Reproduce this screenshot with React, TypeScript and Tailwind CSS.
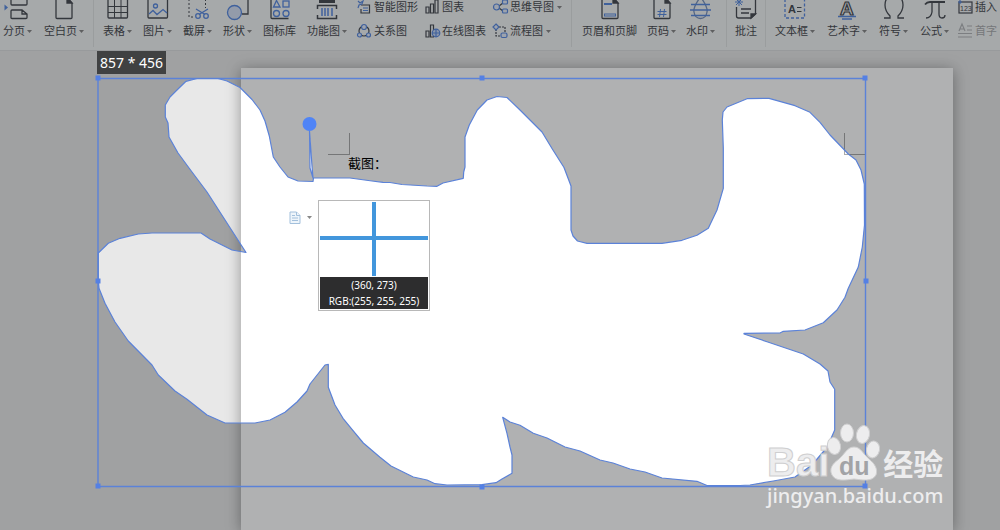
import { ReactNode } from "react";
import clsx from "clsx";

const INK = "#4b4f55";
const BLUE = "#5c8be0";

// freehand outline of the captured region
const REGION =
  "M246 252.5L207 192L192 172L178 153L169 137L168 123L165.300 117L165.300 105L170 97L177 90L186 81.300L197 78.500L218 78.500L227 81L240 87.500L252 99.500L260 110L265 121L269.300 136L273.300 157L280 167L288 177L298 181L313 181.500L313.500 178L350 178L372 181L383 182.300L390 182.500L402 184.500L427 186L437 186.300L443 183L463.300 178.300L463.700 172L465 167L465 137L469.300 125L477.300 110L487 100L497 96.500L507 97.500L520 110L542 132L552 148.500L564 167.500L571 186L571 230L573 236L577.500 241L587 243.300L662 243.300L682 240.300L697 235.300L708.300 228.300L717 210L723.300 188.300L723.300 148.300L722.300 120L723 112L727 107L747 98.700L769 98.300L795 105.700L810 112.300L820 122.300L830 135L848.300 154L856 160L861 170L864.300 184L864.500 225L862.300 247L858.300 267L848.300 288.300L845 297.300L837 310L823.300 322.700L805 330L783.300 331.300L780 333L744 333.300L744 334L767 341.700L803.300 354L820 364L828 371L830 382L834.700 389.300L834.700 430L827.300 447L812 465L795 477L773.300 481L750 485L740 485.500L707 485.500L697 481.300L662 478L645 472L630 469L613 463L600 460L580 451L565 447L547 438L533.300 433.300L520 425.300L510 422L502.700 417.300L507 433.300L510 447L512 455L512 473.300L502 479L496 482.700L482 484.700L447 485L435 483.700L427 480L413.300 477L391 466L380 457.300L363.300 443L352 429.300L343 418.300L335 405L328.300 387.300L328.300 364.300L325 365L310 384L307 391L297 402L285 412.300L270 420L255 423L225 423L207 415L187 399.300L175 391L158.300 375L152 365L128.300 341L115 322L105 303.300L99 288.300L98.300 280L98.300 253L108.300 243.300L120 238.300L138.300 234L152 233L201 233L210 239L232 250Z";
const SLIVER = "M309.500 131L310 168L313 178L312 166Z";

const HANDLES = [
  [98, 78], [482, 78], [865, 78],
  [98, 281], [866, 281],
  [98, 486], [482, 487], [865, 486],
];

const BigIcon = ({ children }: { children: ReactNode }) => (
  <svg
    width="22"
    height="22"
    viewBox="0 0 22 22"
    fill="none"
    stroke={INK}
    strokeWidth="1.3"
    className="shrink-0 overflow-visible"
  >
    {children}
  </svg>
);

const SmallIcon = ({ children }: { children: ReactNode }) => (
  <svg
    width="14"
    height="14"
    viewBox="0 0 14 14"
    fill="none"
    stroke={INK}
    strokeWidth="1.2"
    className="shrink-0 overflow-visible"
  >
    {children}
  </svg>
);

const Arrow = () => (
  <svg width="5" height="3" viewBox="0 0 5 3" fill="#888" className="shrink-0">
    <path d="M0 0H5L2.500 3Z" />
  </svg>
);

type ToolProps = { label: string; icon: ReactNode; menu?: boolean };

const Tool = ({ label, icon, menu }: ToolProps) => (
  <button className="flex shrink-0 flex-col items-center gap-1">
    <BigIcon>{icon}</BigIcon>
    <span className="flex items-center gap-[2px] whitespace-nowrap">
      {label}
      {menu && <Arrow />}
    </span>
  </button>
);

const SmallTool = ({ label, icon, menu, disabled }: ToolProps & { disabled?: boolean }) => (
  <button
    disabled={disabled}
    className={clsx(
      "flex h-[14px] shrink-0 items-center gap-[3px] leading-[14px] whitespace-nowrap",
      disabled && "text-[#aaacae]"
    )}
  >
    <SmallIcon>{icon}</SmallIcon>
    {label}
    {menu && <Arrow />}
  </button>
);

const SmallColumn = ({ children }: { children: ReactNode }) => (
  <div className="flex flex-col justify-end gap-[10px] pb-px">{children}</div>
);

const Divider = () => <span className="-mb-2 h-14 w-px shrink-0 bg-[#e0e2e3]" />;

const pageIcon = (
  <>
    <path d="M3 -2V20.500Q3 21.500 4 21.500H18Q19 21.500 19 20.500V6L14 0" />
    <path d="M14 1V6H19Z" fill={INK} />
  </>
);

const Ribbon = () => (
  <header className="flex h-[51px] items-end overflow-hidden border-b border-[#dcdedf] bg-[#f1f3f4] pb-[11px] text-[11px] leading-4 text-[#4b4e52]">
    <div className="flex shrink-0 gap-3 pr-[9px] pl-[3px]">
      <Tool
        menu
        label="分页"
        icon={
          <>
            <path d="M4 -2V7Q4 8 5 8H19Q20 8 20 7V-2" />
            <path d="M4 21V14Q4 13 5 13H15L20 17V20.500Q20 21.500 19 21.500H5Q4 21.500 4 21M15 13V17H20" />
            <path d="M-2.500 7.500L1 10.500L-2.500 13.500Z" fill={BLUE} stroke="none" />
          </>
        }
      />
      <Tool menu label="空白页" icon={pageIcon} />
    </div>
    <Divider />
    <div className="flex shrink-0 gap-[11px] px-[9px]">
      <Tool
        menu
        label="表格"
        icon={
          <>
            <rect x="1" y="0" width="19.500" height="21" rx="1" />
            <path d="M1 9.500H20.500M1 15.500H20.500M7.500 0V21M14 0V21" strokeWidth="1" />
          </>
        }
      />
      <Tool
        menu
        label="图片"
        icon={
          <>
            <rect x="1" y="0" width="19.500" height="21" rx="1" />
            <circle cx="8.500" cy="9" r="2" stroke={BLUE} />
            <path d="M2 17L6 13.500L10 17.500L16 12.500L20 16" stroke={BLUE} />
          </>
        }
      />
      <Tool
        menu
        label="截屏"
        icon={
          <>
            <path d="M2 2V20H7M18.500 2V11" strokeDasharray="2 2" strokeWidth="1" />
            <g stroke={BLUE}>
              <circle cx="11" cy="19" r="2.300" />
              <circle cx="19" cy="19" r="2.300" />
              <path d="M9 12L18 17.500M21 12L12 17.500" />
            </g>
          </>
        }
      />
      <Tool
        menu
        label="形状"
        icon={
          <>
            <path d="M8 3V-1H21V17H15" />
            <circle cx="7.500" cy="15.500" r="7" stroke={BLUE} fill="#d5e0f4" />
          </>
        }
      />
      <Tool
        label="图标库"
        icon={
          <>
            <path d="M19.500 21.500H3Q2 21.500 2 20.500V0" />
            <g stroke={BLUE}>
              <path d="M7.500 3.500L11 10H4.500Z" />
              <rect x="14" y="4" width="6" height="6" />
              <circle cx="7.500" cy="16.500" r="3" />
              <circle cx="17" cy="16.500" r="3" />
            </g>
          </>
        }
      />
      <Tool
        menu
        label="功能图"
        icon={
          <>
            <path d="M3 4.500H19" strokeWidth="3" />
            <path d="M1.500 12V8.500H20.500V12M1.500 18V21.500H20.500V18" strokeWidth="1.500" />
            <path d="M6 11V19M9 11V19M12 11V19M16 11V19" stroke={BLUE} strokeWidth="1.500" />
          </>
        }
      />
      <div className="-ml-px flex gap-[7px]">
        <SmallColumn>
          <SmallTool
            label="智能图形"
            icon={
              <>
                <path d="M4 5H12.500V13H4V9" />
                <path d="M6 8H11M6 10.500H11" stroke={BLUE} />
                <path d="M1 1L3 3L6 1L5 4L2 5L1 8" stroke={BLUE} />
              </>
            }
          />
          <SmallTool
            label="关系图"
            icon={
              <>
                <circle cx="7" cy="7" r="5" />
                <g stroke={BLUE} fill="#e4ebf8">
                  <circle cx="7" cy="3" r="2.500" />
                  <circle cx="2.500" cy="11" r="2" />
                  <circle cx="11.500" cy="11" r="2" />
                </g>
              </>
            }
          />
        </SmallColumn>
        <SmallColumn>
          <SmallTool
            label="图表"
            icon={<path d="M1 7H4V13H1ZM5.500 4H8.500V13H5.500ZM10 0H13V13H10Z" />}
          />
          <SmallTool
            label="在线图表"
            icon={
              <>
                <path d="M1 7H4V13H1ZM5.500 1H8.500V13H5.500Z" />
                <circle cx="11" cy="9" r="3.800" stroke={BLUE} fill="#c8d8f4" />
                <path d="M7 9H15M11 5V13" stroke={BLUE} />
              </>
            }
          />
        </SmallColumn>
        <SmallColumn>
          <SmallTool
            menu
            label="思维导图"
            icon={
              <>
                <path d="M6 6L10 3M6 8L10 11" />
                <g stroke={BLUE} fill="#e4ebf8">
                  <circle cx="3.500" cy="7" r="3" />
                  <rect x="9.500" y="0" width="5" height="4" rx="1" />
                  <rect x="9.500" y="9" width="5" height="4" rx="1" />
                </g>
              </>
            }
          />
          <SmallTool
            menu
            label="流程图"
            icon={
              <>
                <path d="M3 5V12H7M6 3H12V8" strokeDasharray="2 1" />
                <g stroke={BLUE} fill="#e4ebf8">
                  <path d="M3 0L6 3L3 6L0 3Z" />
                  <rect x="8" y="9" width="6" height="4.500" rx="1.500" />
                </g>
              </>
            }
          />
        </SmallColumn>
      </div>
    </div>
    <Divider />
    <div className="flex shrink-0 gap-[10px] pr-[11px] pl-[10px]">
      <Tool
        label="页眉和页脚"
        icon={
          <>
            {pageIcon}
            <path d="M5 7H13" stroke={BLUE} strokeWidth="2" />
            <rect x="5.500" y="17" width="11" height="2" stroke={BLUE} strokeWidth="1" />
          </>
        }
      />
      <Tool
        menu
        label="页码"
        icon={
          <>
            {pageIcon}
            <path d="M9.500 12L8.500 20M13.500 12L12.500 20M6.500 14.500H15.500M6.500 17.500H15.500" stroke={BLUE} strokeWidth="1" />
          </>
        }
      />
      <Tool
        menu
        label="水印"
        icon={
          <>
            <path d="M10.500 0Q3 10 4 15Q5 21.500 10.500 21.500Q16 21.500 17 15Q18 10 10.500 0Z" stroke="#7b93bd" />
            <path d="M1 7.500H20M0 13H21M1 18.500H20" stroke={BLUE} />
          </>
        }
      />
    </div>
    <Divider />
    <div className="flex shrink-0 px-2">
      <Tool
        label="批注"
        icon={
          <>
            <path d="M1.500 10V19Q1.500 21 3.500 21H16L20.500 17V2H8" />
            <path d="M16 21V17H20.500Z" fill={INK} />
            <path d="M6 12H16M6 16H14" />
            <path d="M4 1V9M0 5H8M1 2L7 8M7 2L1 8" stroke={BLUE} strokeWidth="1" />
          </>
        }
      />
    </div>
    <Divider />
    <div className="flex shrink-0 gap-3 pl-[9px]">
      <Tool
        menu
        label="文本框"
        icon={
          <>
            <rect x="1" y="1" width="19.500" height="20" strokeDasharray="3 2" stroke={BLUE} />
            <text x="4" y="15.500" fontSize="11" fontWeight="700" fill={INK} stroke="none" fontFamily="Liberation Sans">A</text>
            <path d="M13 10.500H17.500M13 14.500H17.500" strokeWidth="1" />
          </>
        }
      />
      <Tool
        menu
        label="艺术字"
        icon={
          <>
            <text x="4" y="18" fontSize="19" fontWeight="700" strokeWidth="1.200" fontFamily="Liberation Sans">A</text>
            <path d="M2 19.500H20M6 22H16" stroke={BLUE} />
          </>
        }
      />
      <Tool
        menu
        label="符号"
        icon={<path d="M1 21H7V19Q2 14 2 8Q2 -1 11 -1Q20 -1 20 8Q20 14 15 19V21H21" />}
      />
      <Tool
        menu
        label="公式"
        icon={
          <>
            <path d="M1 7.500Q3 5 6 5H21" strokeWidth="1.800" />
            <path d="M8 5V15Q7 21 2 21M15 5V17Q15 21 18 21Q21 21 21 18" />
          </>
        }
      />
      <div className="-ml-[3px] flex">
        <SmallColumn>
          <SmallTool
            label="插入"
            icon={
              <>
                <rect x="1" y="2" width="13" height="11" />
                <text x="2" y="11" fontSize="7" fill={INK} stroke="none" fontFamily="Liberation Sans">123</text>
                <path d="M2 0V4M0 2H4" stroke={BLUE} />
              </>
            }
          />
          <SmallTool
            disabled
            label="首字"
            icon={
              <g stroke="#b4b6b8">
                <path d="M1 7L4 0L7 7M2 5H6M9 2H14M9 6H14M0 9.500H14M0 13H14" />
              </g>
            }
          />
        </SmallColumn>
      </div>
    </div>
  </header>
);

const Document = () => (
  <main className="flex flex-1 pt-[17px] pr-[47px] pl-[241px]">
    <article className="flex-1 bg-white px-[87px] pt-[65px] shadow-[0_2px_14px_rgba(0,0,0,0.36)]">
      <div className="flex justify-between">
        <span className="size-[22px] border-r border-b border-[#aaa]" />
        <span className="size-[22px] border-b border-l border-[#aaa]" />
      </div>
      <p className="pl-5 text-[13px] leading-4 text-black">截图：</p>
    </article>
  </main>
);

const Selection = () => (
  <svg className="absolute inset-0 h-full w-full">
    <path
      d={`M0 0H6000V6000H0Z${REGION}${SLIVER}`}
      fill="#000205"
      fillOpacity="0.31"
      fillRule="evenodd"
    />
    <g fill="none" stroke="#5b82d8" strokeLinejoin="round">
      <path d={REGION + SLIVER} strokeWidth="1.200" />
      <rect x="98" y="78.500" width="767.500" height="408" strokeWidth="1.400" />
    </g>
    <circle cx="309.500" cy="124" r="7" fill="#4f84f6" />
    {HANDLES.map(([x, y]) => (
      <rect key={`${x}-${y}`} x={x - 2.5} y={y - 2.5} width="5" height="5" fill="#5480e4" />
    ))}
  </svg>
);

const Magnifier = () => (
  <div className="absolute top-[200px] left-[318px] w-28 border border-[#b8b8b8] bg-white p-px text-center text-[10px] leading-4 text-white">
    <svg viewBox="0 0 108 75" className="block w-full" stroke="#4296dc" strokeWidth="4">
      <path d="M0 36H108M54 0V74" />
    </svg>
    <div className="bg-[#2d2d2e]">
      <p>(360, 273)</p>
      <p>RGB:(255, 255, 255)</p>
    </div>
  </div>
);

const PasteOptions = () => (
  <button aria-label="选项" className="absolute top-[211px] left-[289px] flex items-center gap-[6px]">
    <svg width="12" height="13" viewBox="0 0 12 13" fill="#eef5fb" stroke="#a3c0dc">
      <path d="M1 1H7.500L11 4.500V12.500H1Z" />
      <path d="M7.500 1V4.500H11M3 4.500H6M3 7H9M3 9.500H9" />
    </svg>
    <Arrow />
  </button>
);

const Watermark = () => (
  <div className="absolute top-[422px] left-[767px] w-[180px] text-[#ededee]">
    <div className="flex h-[60px] items-end whitespace-nowrap">
      <span className="font-['Liberation_Sans'] text-[40px] leading-[40px] font-bold [-webkit-text-stroke:1px_#cfcfd0]">
        Bai
      </span>
      <svg
        width="50"
        height="58"
        viewBox="2 0 50 58"
        fill="currentColor"
        stroke="#cfcfd0"
        className="shrink-0 overflow-visible"
      >
        <ellipse cx="7" cy="22" rx="6.500" ry="8.500" transform="rotate(-12 7 22)" />
        <ellipse cx="20" cy="9" rx="6.500" ry="9" />
        <ellipse cx="36" cy="10.500" rx="6.500" ry="9" transform="rotate(12 36 10.500)" />
        <ellipse cx="46" cy="25.500" rx="6.500" ry="8.500" transform="rotate(12 46 25.500)" />
        <path d="M27 23C20 23 18 30 12 35C5 40 2 45 5 51C9 58 18 56 27 55C36 56 45 58 49 51C51 45 48 40 42 35C36 30 34 23 27 23Z" />
        <text x="12" y="51" fontSize="25" fontWeight="700" fill="#a2a3a6" stroke="none" fontFamily="Liberation Sans">du</text>
      </svg>
      <span className="pl-1 text-[30px] leading-[36px] font-bold">经验</span>
    </div>
    <p className="text-[20px] leading-7 font-medium">jingyan.baidu.com</p>
  </div>
);

export default function App() {
  return (
    <div className="relative flex min-h-screen flex-col overflow-hidden bg-[#e8e8e8] font-['Noto_Sans','Noto_Sans_CJK_SC',sans-serif]">
      <Ribbon />
      <Document />
      <Selection />
      <PasteOptions />
      <Magnifier />
      <div className="absolute top-[51px] left-[97px] bg-[#404142] px-[3px] text-[14px] leading-[23px] text-white">
        857 * 456
      </div>
      <Watermark />
    </div>
  );
}
